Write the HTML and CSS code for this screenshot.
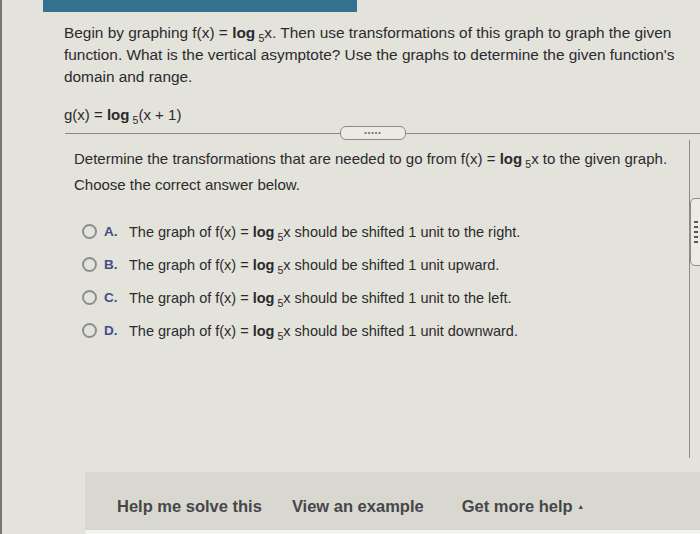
FILE: index.html
```html
<!DOCTYPE html>
<html>
<head>
<meta charset="utf-8">
<link rel="stylesheet" href="styles.css">
</head>
<body>
<div class="page">
  <div class="topbar"></div>
  <div class="question">
    <p class="intro">Begin by graphing f(x) = <b>log</b> <span class="base">5</span>x. Then use transformations of this graph to graph the given function. What is the vertical asymptote? Use the graphs to determine the given function's domain and range.</p>
    <p class="given">g(x) = <b>log</b> <span class="base">5</span>(x + 1)</p>
  </div>
  <div class="divider">
    <span class="line"></span>
    <span class="more">&bull;&bull;&bull;&bull;&bull;</span>
    <span class="line"></span>
  </div>
  <div class="work">
    <p class="prompt">Determine the transformations that are needed to go from f(x) = <b>log</b> <span class="base">5</span>x to the given graph.</p>
    <p class="choose">Choose the correct answer below.</p>
    <ul class="options">
      <li><span class="radio"></span><span class="letter">A.</span><span class="text">The graph of f(x) = <b>log</b> <span class="base">5</span>x should be shifted 1 unit to the right.</span></li>
      <li><span class="radio"></span><span class="letter">B.</span><span class="text">The graph of f(x) = <b>log</b> <span class="base">5</span>x should be shifted 1 unit upward.</span></li>
      <li><span class="radio"></span><span class="letter">C.</span><span class="text">The graph of f(x) = <b>log</b> <span class="base">5</span>x should be shifted 1 unit to the left.</span></li>
      <li><span class="radio"></span><span class="letter">D.</span><span class="text">The graph of f(x) = <b>log</b> <span class="base">5</span>x should be shifted 1 unit downward.</span></li>
    </ul>
    <div class="handle"><span></span><span></span><span></span><span></span><span></span></div>
  </div>
  <div class="footer">
    <span class="link">Help me solve this</span>
    <span class="link">View an example</span>
    <span class="link more-help">Get more help <span class="caret">&#9650;</span></span>
  </div>
</div>
</body>
</html>
```
FILE: styles.css
```css
html, body {
  margin: 0;
  padding: 0;
}
body {
  width: 700px;
  height: 534px;
  overflow: hidden;
  background: #e3e2db;
  font-family: "Liberation Sans", Arial, sans-serif;
  color: #2b2b2e;
}
.page {
  position: relative;
  height: 534px;
  border-left: 2px solid #77766f;
  box-sizing: border-box;
  display: flex;
  flex-direction: column;
}
.topbar {
  margin-left: 41px;
  width: 314px;
  height: 12px;
  background: #35708e;
}
.question {
  padding-left: 62px;
  padding-right: 24px;
}
p { margin: 0; }
.base {
  display: inline-block;
  font-size: 10.5px;
  line-height: 10px;
  position: relative;
  top: 4px;
  margin-left: -1px;
}
.intro {
  margin-top: 10px;
  font-size: 15.4px;
  line-height: 22px;
}
.given {
  margin-top: 16px;
  font-size: 15px;
  line-height: 22px;
}
.divider {
  display: flex;
  align-items: center;
  padding-left: 63px;
}
.divider .line {
  flex: 1;
  height: 1px;
  background: #8a8985;
}
.divider .line:first-child { flex: 0 0 275px; }
.more {
  width: 64px;
  height: 12px;
  border: 1px solid #8a8985;
  border-radius: 6px;
  background: #ebeae4;
  font-size: 7px;
  line-height: 12px;
  letter-spacing: 1px;
  text-align: center;
  color: #666;
}
.work {
  position: relative;
  margin-right: 10px;
  border-right: 1px solid #8c8b86;
  padding-left: 72px;
  height: 318px;
}
.prompt {
  margin-top: 8px;
  font-size: 15px;
  line-height: 22px;
}
.choose {
  margin-top: 4px;
  font-size: 15px;
  line-height: 22px;
}
.options {
  list-style: none;
  margin: 19px 0 0 0;
  padding: 0 0 0 8px;
}
.options li {
  display: flex;
  align-items: center;
  height: 33px;
  font-size: 14.5px;
}
.radio {
  width: 11px;
  height: 11px;
  border: 2px solid #8e8e92;
  border-radius: 50%;
  margin-right: 7px;
  flex: none;
}
.letter {
  color: #3f4e8a;
  font-weight: bold;
  font-size: 13.5px;
  width: 25px;
  flex: none;
}
.handle {
  position: absolute;
  right: -12px;
  top: 58px;
  width: 9px;
  height: 66px;
  border: 1px solid #8c8b86;
  border-radius: 5px 0 0 5px;
  background: #ecebe5;
  display: flex;
  flex-direction: column;
  justify-content: center;
  align-items: center;
  gap: 3px;
}
.handle span {
  width: 4px;
  height: 2px;
  background: #555;
}
.footer {
  margin-top: auto;
  margin-left: 83px;
  height: 62px;
  background: #d9d8d0;
  display: flex;
  align-items: center;
  padding-left: 32px;
  gap: 30px;
  border-bottom: 4px solid #f2f2ee;
  box-sizing: border-box;
  padding-top: 10px;
}
.link {
  font-weight: bold;
  font-size: 16.5px;
  color: #45464b;
}
.more-help { margin-left: 8px; }
.caret {
  font-size: 7px;
  vertical-align: 3px;
}
```
